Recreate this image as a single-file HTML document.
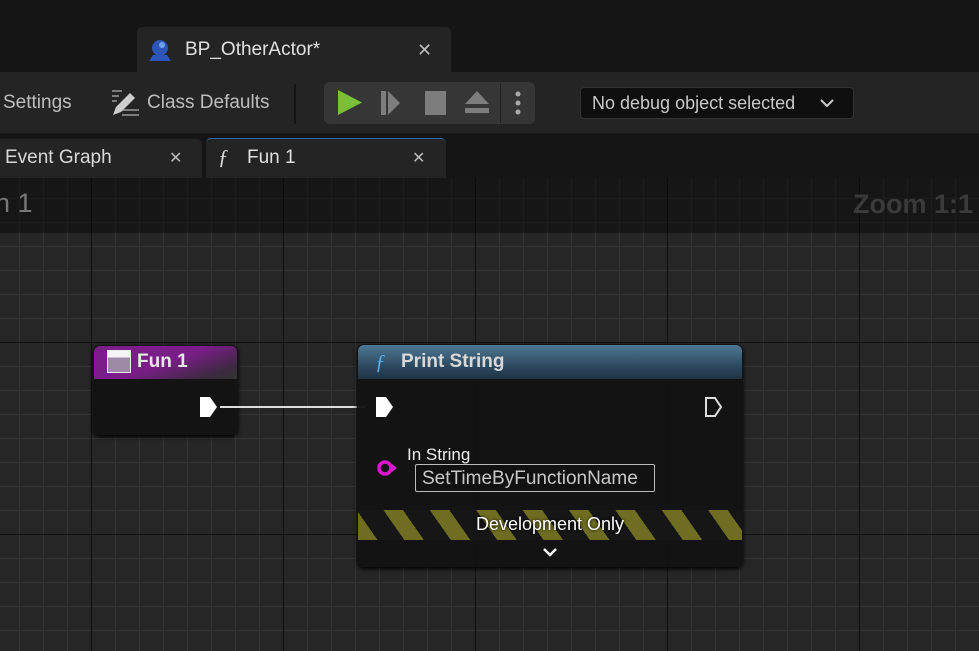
<!DOCTYPE html>
<html><head><meta charset="utf-8"><style>
*{margin:0;padding:0;box-sizing:border-box}
body{width:979px;height:651px;overflow:hidden;background:#151515;font-family:"Liberation Sans",sans-serif;position:relative;color:#c0c0c0}
.a{position:absolute}
.grid{left:0;top:178px;width:979px;height:473px;background-color:#262626;
background-image:
linear-gradient(90deg,#111 1px,transparent 1px),
linear-gradient(0deg,#111 1px,transparent 1px),
linear-gradient(90deg,#353535 1px,transparent 1px),
linear-gradient(0deg,#353535 1px,transparent 1px);
background-size:192px 192px,192px 192px,24px 24px,24px 24px;
background-position:91px 165px,91px 165px,19px 21px,19px 21px}
.x{font-size:16px;color:#bbb}
</style></head><body>
<div class="a" style="left:137px;top:27px;width:314px;height:46px;background:#242424;border-radius:5px 5px 0 0"></div>
<svg class="a" style="left:147px;top:36px" width="28" height="28" viewBox="0 0 28 28"><circle cx="13" cy="12" r="8" fill="#2c56b8"/><circle cx="15" cy="9" r="3" fill="#6f9ff0"/><path d="M2 25 L6 19 L20 19 L24 25Z" fill="#2c56b8"/></svg>
<div class="a" style="left:185px;top:39px;font-size:19px;color:#e0e0e0">BP_OtherActor*</div>
<div class="a x" style="left:417px;top:40px;font-size:18px">✕</div>
<div class="a" style="left:0;top:72px;width:979px;height:61px;background:#242424"></div>
<div class="a" style="left:3px;top:92px;font-size:19px;color:#bdbdbd">Settings</div>
<svg class="a" style="left:110px;top:88px" width="32" height="30" viewBox="0 0 32 30"><path d="M2 3h10M2 8h7M2 13h5M12 22h17M12 27h17" stroke="#999" stroke-width="1.5"/><path d="M3 27l3-8 14-14 5 5-14 14z" fill="#ccc"/></svg>
<div class="a" style="left:147px;top:92px;font-size:19px;color:#bdbdbd">Class Defaults</div>
<div class="a" style="left:294px;top:84px;width:2px;height:40px;background:#151515"></div>
<div class="a" style="left:324px;top:82px;width:211px;height:42px;background:#363636;border-radius:6px"></div>
<div class="a" style="left:500px;top:83px;width:1px;height:40px;background:#222"></div>
<svg class="a" style="left:324px;top:82px" width="211" height="42"><path d="M14 8 L14 33 L38 20.5Z" fill="#79c03a"/><rect x="57" y="9" width="5" height="24" fill="#7d7d7d"/><path d="M64 9 L64 33 L76 21Z" fill="#7d7d7d"/><rect x="101" y="9" width="21" height="24" fill="#7d7d7d"/><path d="M141 22 L153 9 L165 22Z M141 26h24v5h-24z" fill="#7d7d7d"/><circle cx="194" cy="12" r="2.5" fill="#aaa"/><circle cx="194" cy="21" r="2.5" fill="#aaa"/><circle cx="194" cy="30" r="2.5" fill="#aaa"/></svg>
<div class="a" style="left:580px;top:87px;width:274px;height:32px;background:#0f0f0f;border:1px solid #333;border-radius:4px"></div>
<div class="a" style="left:592px;top:93px;font-size:18px;color:#c8c8c8">No debug object selected</div>
<svg class="a" style="left:819px;top:97px" width="16" height="12"><path d="M2 3l6 6 6-6" fill="none" stroke="#ccc" stroke-width="2"/></svg>
<div class="a" style="left:0;top:139px;width:202px;height:39px;background:#242424;border-radius:0 5px 0 0"></div>
<div class="a" style="left:5px;top:147px;font-size:19px;color:#d8d8d8">Event Graph</div>
<div class="a x" style="left:169px;top:148px">✕</div>
<div class="a" style="left:206px;top:138px;width:240px;height:40px;background:#242424;border-top:1px solid #2a6ab0;border-radius:5px 5px 0 0"></div>
<div class="a" style="left:218px;top:145px;font-size:21px;font-style:italic;font-family:'Liberation Serif',serif;color:#ddd">ƒ</div>
<div class="a" style="left:247px;top:147px;font-size:19px;color:#e0e0e0">Fun 1</div>
<div class="a x" style="left:412px;top:148px">✕</div>
<div class="a grid"></div>
<div class="a" style="left:0;top:178px;width:979px;height:55px;background:rgba(10,10,10,0.55)"></div>
<div class="a" style="left:-5px;top:188px;font-size:27px;color:#777">n 1</div>
<div class="a" style="left:853px;top:189px;font-size:27px;font-weight:bold;color:#3a3a3a">Zoom 1:1</div>
<div class="a" style="left:93px;top:345px;width:145px;height:90px;background:rgba(18,18,18,0.95);border-radius:7px;box-shadow:0 2px 4px #000"></div>
<div class="a" style="left:94px;top:346px;width:143px;height:33px;border-radius:6px 6px 0 0;background:linear-gradient(160deg,#7d1d8c 0%,#7a1d88 50%,#3b2a3f 85%,#333 100%)"></div>
<div class="a" style="left:107px;top:350px;width:24px;height:23px;border:1px solid #eee;background:linear-gradient(#f5f5f5 0 30%,#9e8aa6 30%)"></div>
<div class="a" style="left:137px;top:351px;font-size:19px;font-weight:bold;color:#e6e6e6">Fun 1</div>
<svg class="a" style="left:198px;top:396px" width="22" height="22"><path d="M2 1h10l7 10-7 10H2z" fill="#fff"/></svg>
<div class="a" style="left:220px;top:406px;width:145px;height:2px;background:#ddd"></div>
<div class="a" style="left:357px;top:344px;width:386px;height:223px;background:rgba(18,18,18,0.95);border-radius:7px;box-shadow:0 2px 4px #000"></div>
<div class="a" style="left:358px;top:345px;width:384px;height:34px;border-radius:6px 6px 0 0;background:linear-gradient(180deg,#4f7894,#2c4a60 60%,#1f3444)"></div>
<div class="a" style="left:375px;top:350px;font-size:21px;font-style:italic;font-family:'Liberation Serif',serif;color:#5aaee8">ƒ</div>
<div class="a" style="left:401px;top:351px;font-size:19px;font-weight:bold;color:#d8d8d8">Print String</div>
<svg class="a" style="left:374px;top:396px" width="22" height="22"><path d="M2 1h10l7 10-7 10H2z" fill="#fff"/></svg>
<svg class="a" style="left:703px;top:396px" width="22" height="22"><path d="M3 2h9l6 9-6 9H3z" fill="none" stroke="#ddd" stroke-width="2"/></svg>
<div class="a" style="left:407px;top:445px;font-size:17px;color:#eee">In String</div>
<svg class="a" style="left:375px;top:458px" width="26" height="20"><circle cx="10" cy="10" r="6" fill="none" stroke="#d61ac8" stroke-width="3.5"/><path d="M17 6l5 4-5 4z" fill="#d61ac8"/></svg>
<div class="a" style="left:415px;top:464px;width:240px;height:28px;border:1px solid #bbb;border-radius:2px;background:#111"></div>
<div class="a" style="left:422px;top:468px;font-size:19px;color:#c8c8c8">SetTimeByFunctionName</div>
<div class="a" style="left:358px;top:510px;width:384px;height:30px;background:repeating-linear-gradient(55deg,#6e6d22 0 16px,#161616 16px 38px)"></div>
<div class="a" style="left:358px;top:514px;width:384px;text-align:center;font-size:18px;color:#fff;text-shadow:0 0 3px #000">Development Only</div>
<svg class="a" style="left:541px;top:545px" width="18" height="14"><path d="M3 4l6 6 6-6" fill="none" stroke="#fff" stroke-width="2.5"/></svg>
</body></html>
